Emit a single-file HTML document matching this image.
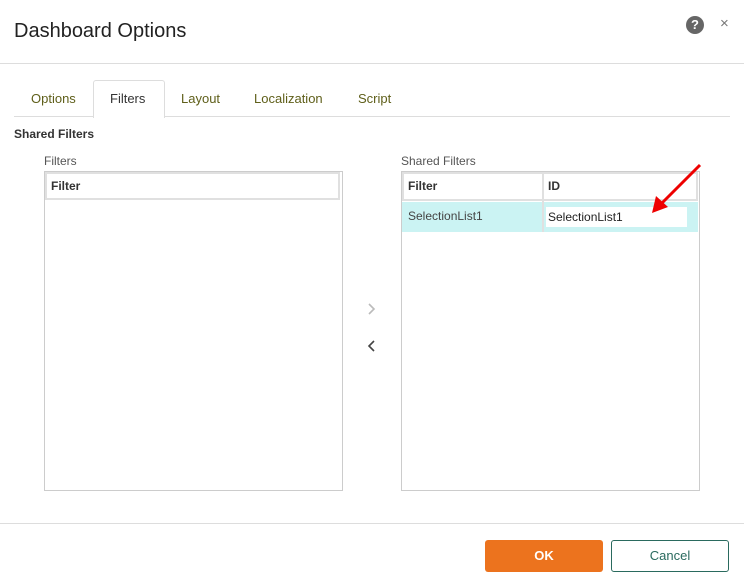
<!DOCTYPE html>
<html><head><style>
body{margin:0;width:744px;height:588px;background:#fff;font-family:"Liberation Sans",sans-serif;position:relative;overflow:hidden;color:#333}
.a{position:absolute}
.t{font-size:13px}
</style></head><body>
<div class="a" style="left:14px;top:20px;font-size:20px;color:#222">Dashboard Options</div>
<div class="a" style="left:686px;top:16px;width:18px;height:18px;border-radius:50%;background:#666;color:#fff;font-weight:bold;font-size:13px;text-align:center;line-height:18px">?</div>
<div class="a" style="left:720px;top:15px;font-size:15px;color:#777">×</div>
<div class="a" style="left:0;top:63px;width:744px;height:1px;background:#ddd"></div>
<div class="a" style="left:14px;top:116px;width:716px;height:1px;background:#ddd"></div>
<div class="a" style="left:93px;top:80px;width:70px;height:37px;border:1px solid #ddd;border-bottom:none;background:#fff;border-radius:3px 3px 0 0"></div>
<div class="a t" style="left:31px;top:91px;color:#5f5f1a">Options</div>
<div class="a t" style="left:110px;top:91px;color:#333">Filters</div>
<div class="a t" style="left:181px;top:91px;color:#5f5f1a">Layout</div>
<div class="a t" style="left:254px;top:91px;color:#5f5f1a">Localization</div>
<div class="a t" style="left:358px;top:91px;color:#5f5f1a">Script</div>
<div class="a" style="left:14px;top:127px;font-size:12px;font-weight:bold">Shared Filters</div>
<div class="a" style="left:44px;top:154px;font-size:12px;color:#555">Filters</div>
<div class="a" style="left:44px;top:171px;width:297px;height:318px;border:1px solid #ccc"></div>
<div class="a" style="left:45px;top:172px;width:295px;height:28px;border:2px solid #e0e0e0;box-sizing:border-box"></div>
<div class="a" style="left:51px;top:179px;font-size:12px;font-weight:bold">Filter</div>
<svg class="a" style="left:366px;top:302px" width="12" height="14"><polyline points="3,2 8,7 3,12" fill="none" stroke="#bbb" stroke-width="1.6"/></svg>
<svg class="a" style="left:366px;top:339px" width="12" height="14"><polyline points="8,2 3,7 8,12" fill="none" stroke="#444" stroke-width="1.6"/></svg>
<div class="a" style="left:401px;top:154px;font-size:12px;color:#555">Shared Filters</div>
<div class="a" style="left:401px;top:171px;width:297px;height:318px;border:1px solid #ccc"></div>
<div class="a" style="left:402px;top:172px;width:296px;height:29px;border:2px solid #e0e0e0;box-sizing:border-box"></div>
<div class="a" style="left:542px;top:172px;width:2px;height:60px;background:#e0e0e0"></div>
<div class="a" style="left:408px;top:179px;font-size:12px;font-weight:bold">Filter</div>
<div class="a" style="left:548px;top:179px;font-size:12px;font-weight:bold">ID</div>
<div class="a" style="left:402px;top:202px;width:296px;height:30px;background:#cbf3f3"></div>
<div class="a" style="left:542px;top:202px;width:2px;height:30px;background:#e0e0e0"></div>
<div class="a" style="left:546px;top:207px;width:141px;height:20px;background:#fff"></div>
<div class="a" style="left:408px;top:209px;font-size:12px;color:#444">SelectionList1</div>
<div class="a" style="left:548px;top:210px;font-size:12px;color:#222">SelectionList1</div>
<svg class="a" style="left:640px;top:160px" width="70" height="60"><line x1="60" y1="5" x2="20" y2="45" stroke="#e00" stroke-width="3"/><polygon points="12,53 16,36 28,47" fill="#e00"/></svg>
<div class="a" style="left:0;top:523px;width:744px;height:1px;background:#ddd"></div>
<div class="a" style="left:485px;top:540px;width:118px;height:32px;background:#ec731e;border-radius:3px;color:#fff;font-weight:bold;font-size:13px;text-align:center;line-height:32px">OK</div>
<div class="a" style="left:611px;top:540px;width:116px;height:30px;border:1px solid #2a6a5e;border-radius:3px;color:#2a6a5e;font-size:13px;text-align:center;line-height:30px">Cancel</div>
</body></html>
